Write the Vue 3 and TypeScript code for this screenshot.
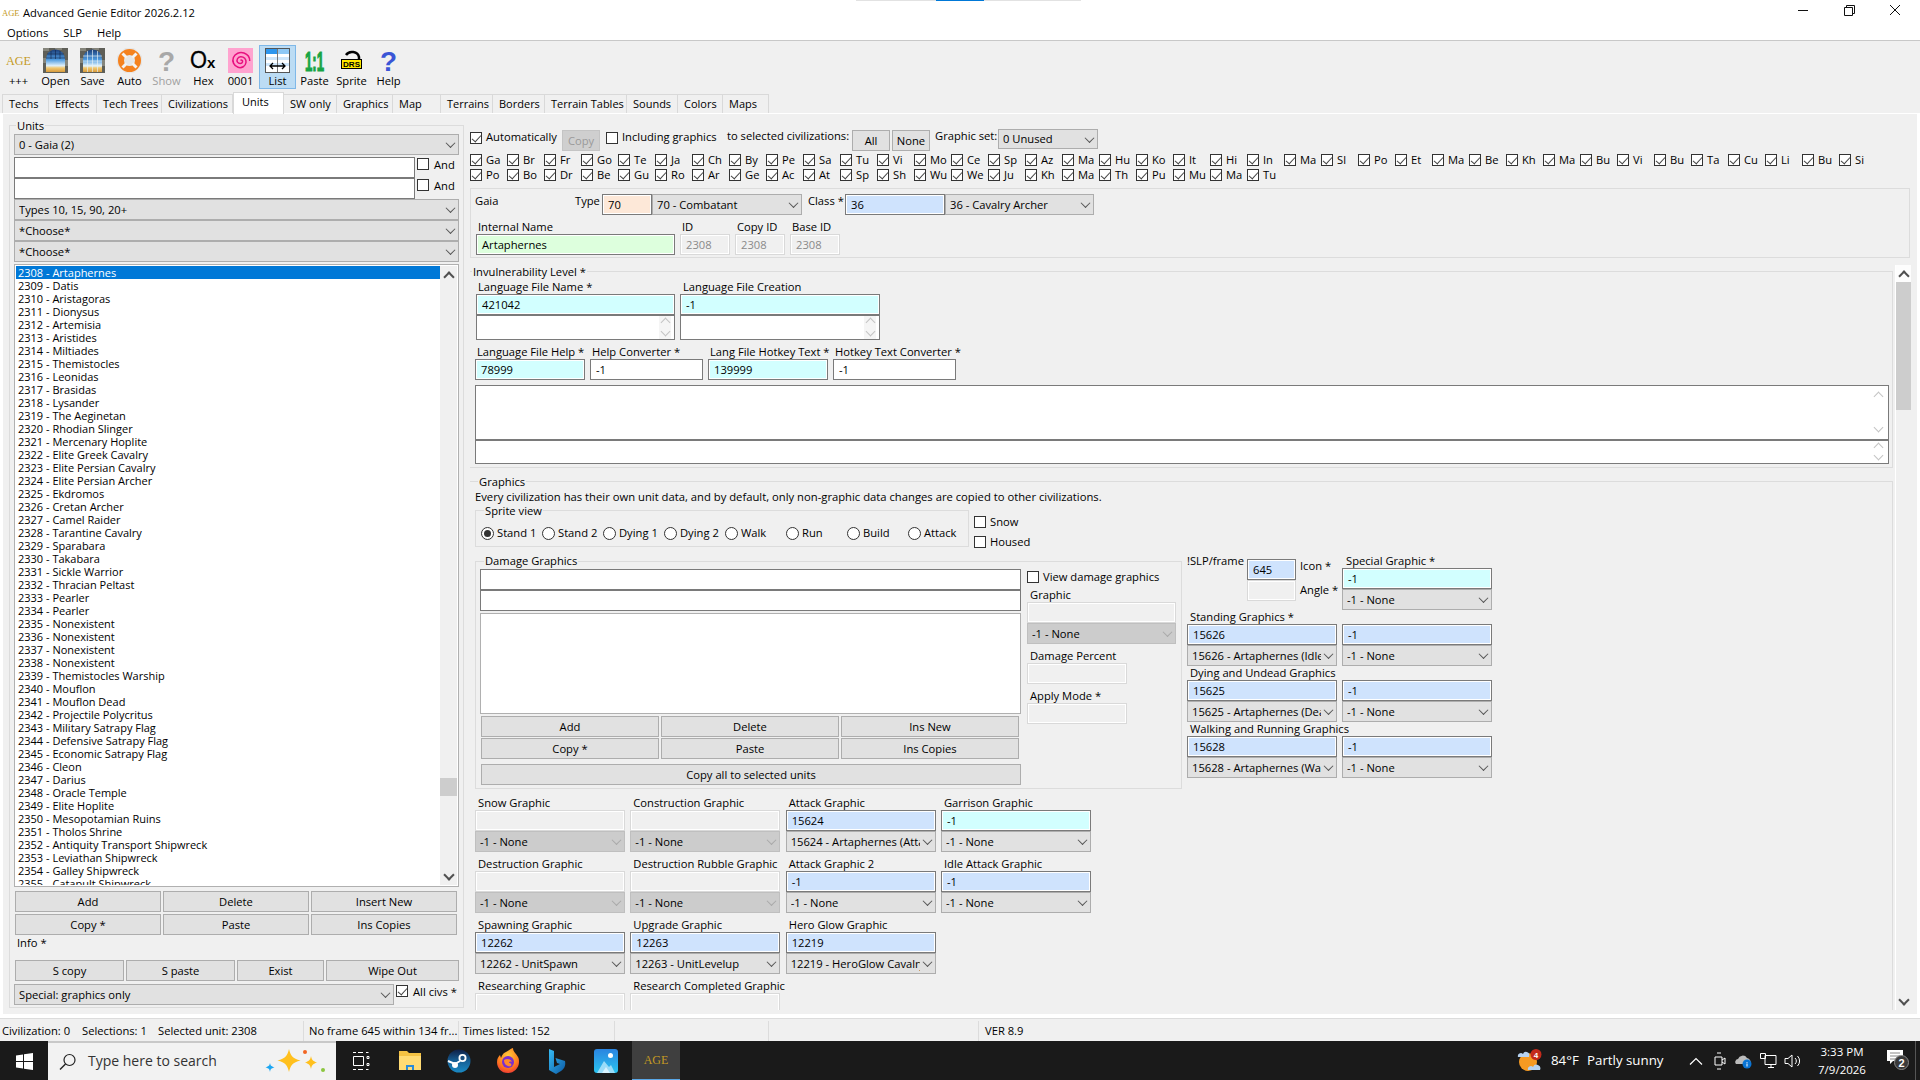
<script setup lang="ts">
const units: string[] = ['Artaphernes','Datis','Aristagoras','Dionysus','Artemisia','Aristides','Miltiades','Themistocles','Leonidas','Brasidas','Lysander','The Aeginetan','Rhodian Slinger','Mercenary Hoplite','Elite Greek Cavalry','Elite Persian Cavalry','Elite Persian Archer','Ekdromos','Cretan Archer','Camel Raider','Tarantine Cavalry','Sparabara','Takabara','Sickle Warrior','Thracian Peltast','Pearler','Pearler','Nonexistent','Nonexistent','Nonexistent','Nonexistent','Themistocles Warship','Mouflon','Mouflon Dead','Projectile Polycritus','Military Satrapy Flag','Defensive Satrapy Flag','Economic Satrapy Flag','Cleon','Darius','Oracle Temple','Elite Hoplite','Mesopotamian Ruins','Tholos Shrine','Antiquity Transport Shipwreck','Leviathan Shipwreck','Galley Shipwreck','Catapult Shipwreck']
const tabs = ['Techs','Effects','Tech Trees','Civilizations','Units','SW only','Graphics','Map','Terrains','Borders','Terrain Tables','Sounds','Colors','Maps']
const civs = 'Ga Br Fr Go Te Ja Ch By Pe Sa Tu Vi Mo Ce Sp Az Ma Hu Ko It Hi In Ma Sl Po Et Ma Be Kh Ma Bu Vi Bu Ta Cu Li Bu Si Po Bo Dr Be Gu Ro Ar Ge Ac At Sp Sh Wu We Ju Kh Ma Th Pu Mu Ma Tu'.split(' ')
const radios = ['Stand 1','Stand 2','Dying 1','Dying 2','Walk','Run','Build','Attack']
interface Gfx { label: string; val: string; cls: string; combo: string; off?: boolean; filler?: boolean }
const gfx: Gfx[] = [
  { label:'Snow Graphic', val:'', cls:'off', combo:'-1 - None', off:true },
  { label:'Construction Graphic', val:'', cls:'off', combo:'-1 - None', off:true },
  { label:'Attack Graphic', val:'15624', cls:'bl', combo:'15624 - Artaphernes (Attack)' },
  { label:'Garrison Graphic', val:'-1', cls:'cy', combo:'-1 - None' },
  { label:'Destruction Graphic', val:'', cls:'off', combo:'-1 - None', off:true },
  { label:'Destruction Rubble Graphic', val:'', cls:'off', combo:'-1 - None', off:true },
  { label:'Attack Graphic 2', val:'-1', cls:'bl', combo:'-1 - None' },
  { label:'Idle Attack Graphic', val:'-1', cls:'bl', combo:'-1 - None' },
  { label:'Spawning Graphic', val:'12262', cls:'bl', combo:'12262 - UnitSpawn' },
  { label:'Upgrade Graphic', val:'12263', cls:'bl', combo:'12263 - UnitLevelup' },
  { label:'Hero Glow Graphic', val:'12219', cls:'bl', combo:'12219 - HeroGlow Cavalry' },
  { label:'', val:'', cls:'', combo:'', filler:true },
  { label:'Researching Graphic', val:'', cls:'off', combo:'-1 - None', off:true },
  { label:'Research Completed Graphic', val:'', cls:'off', combo:'-1 - None', off:true },
]
const pairs = [
  { label:'Standing Graphics *', v:'15626', c:'15626 - Artaphernes (Idle)' },
  { label:'Dying and Undead Graphics', v:'15625', c:'15625 - Artaphernes (Death)' },
  { label:'Walking and Running Graphics', v:'15628', c:'15628 - Artaphernes (Walk)' },
]
</script>

<template>
  <div class="app">
    <div class="loadbar"><i class="lg1"></i><i class="lb"></i><i class="lg2"></i></div>
    <div class="titlebar">
      <span class="t-logo">AGE</span>
      <span class="t-title">Advanced Genie Editor 2026.2.12</span>
      <div class="winbtns">
        <svg width="46" height="23" viewBox="0 0 46 23"><path d="M18 9.500h10" stroke="#111" fill="none"/></svg>
        <svg width="46" height="23" viewBox="0 0 46 23"><path d="M18.500 6.500h8v8h-8zM20.500 6.500v-2h8v8h-2" stroke="#111" fill="none"/></svg>
        <svg width="46" height="23" viewBox="0 0 46 23"><path d="M18 4l10 10M28 4L18 14" stroke="#111" fill="none"/></svg>
      </div>
    </div>
    <div class="menubar"><span>Options</span><span>SLP</span><span>Help</span></div>

    <div class="toolbar">
      <div class="tool">
        <svg class="ti" viewBox="0 0 25 25"><text x="0" y="17" font-family="Liberation Serif" font-size="13" fill="#c49a24" textLength="25" lengthAdjust="spacingAndGlyphs">AGE</text></svg>
        <span>+++</span>
      </div>
      <div class="tool">
        <svg class="ti" viewBox="0 0 25 25">
          <defs><linearGradient id="sky" x1="0" y1="0" x2="0" y2="1"><stop offset="0" stop-color="#1c3f7a"/><stop offset=".45" stop-color="#4f9be0"/><stop offset=".72" stop-color="#dff0fa"/><stop offset=".82" stop-color="#f2c870"/><stop offset="1" stop-color="#d69a3c"/></linearGradient></defs>
          <rect width="25" height="25" fill="#5f5f58"/><path d="M0 0h6v3H0zM12 0h7v2h-7zM0 10h3v5H0zM22 12h3v6h-3z" fill="#85857c"/>
          <path d="M3 24V11a9.500 9.500 0 0 1 19 0v13z" fill="url(#sky)"/>
          <path d="M8 3v8M12.500 2v9M17 3v8M4 6h17M3 10h19" stroke="#10244a" stroke-opacity=".6" fill="none"/>
        </svg>
        <span>Open</span>
      </div>
      <div class="tool">
        <svg class="ti" viewBox="0 0 25 25">
          <rect width="25" height="25" fill="#5f5f58"/><path d="M0 0h6v3H0zM12 0h7v2h-7zM0 10h3v5H0zM22 12h3v6h-3z" fill="#85857c"/>
          <path d="M3 24V11a9.500 9.500 0 0 1 19 0v13z" fill="url(#sky)"/>
          <path d="M7.500 3v21M12.500 2v22M17.500 3v21M3 8h19M3 13h19M3 18h19" stroke="#e8f2f8" stroke-opacity=".65" fill="none"/>
        </svg>
        <span>Save</span>
      </div>
      <div class="tool">
        <svg class="ti" viewBox="0 0 25 25">
          <path d="M8 0h9l8 8v9l-8 8H8l-8-8V8z" fill="#e6e6e6"/>
          <circle cx="12.500" cy="12.500" r="8.500" fill="none" stroke="#f5821f" stroke-width="6"/>
          <path d="M5.500 5.500l4 4M19.500 5.500l-4 4M5.500 19.500l4-4M19.500 19.500l-4-4" stroke="#f3f3f3" stroke-width="3"/>
        </svg>
        <span>Auto</span>
      </div>
      <div class="tool dim">
        <svg class="ti" viewBox="0 0 25 25"><text x="12.500" y="23" text-anchor="middle" font-family="Liberation Sans" font-weight="700" font-size="28" fill="#a8a8a8">?</text></svg>
        <span>Show</span>
      </div>
      <div class="tool">
        <svg class="ti" viewBox="0 0 25 25"><text x="-1" y="20" font-family="Liberation Sans" font-size="24" stroke="#000" stroke-width=".3" fill="#000" textLength="17" lengthAdjust="spacingAndGlyphs">O</text><text x="16" y="20" font-family="Liberation Sans" font-weight="700" font-size="15" fill="#000">x</text></svg>
        <span>Hex</span>
      </div>
      <div class="tool">
        <svg class="ti" viewBox="0 0 25 25"><rect width="25" height="25" fill="#ffa3cf"/><path d="M12.500 12.500c1-1 2.500 0 2 1.500-.6 2-3.800 2-5 .2-1.300-2.200.2-5.200 3-5.500 3.400-.3 6 2.500 5.500 5.800-.5 3.700-4.300 6-8 4.800C6 18 3.800 13.500 5.400 9.500 7 5.500 11.800 3.500 16 5c3.500 1.300 5.800 4.500 5.700 8" fill="none" stroke="#e8107f" stroke-width="1.500"/></svg>
        <span>0001</span>
      </div>
      <div class="tool active">
        <svg class="ti" viewBox="0 0 25 25">
          <rect x=".5" y=".5" width="24" height="24" fill="#fff" stroke="#555"/>
          <path d="M1 1h11v5H1z" fill="#2d96ee"/><path d="M13 1h11v5H13z" fill="#8ec8f5"/>
          <path d="M1 9h11v3H1zM13 9h11v3H13zM1 15h11v3H1zM13 15h11v3H13z" fill="#cfe6fa"/>
          <path d="M12.500 1v23" stroke="#777"/>
          <path d="M5 18h15M8 15l-3 3 3 3M17 15l3 3-3 3" fill="none" stroke="#000" stroke-width="1.300"/>
        </svg>
        <span>List</span>
      </div>
      <div class="tool">
        <svg class="ti" viewBox="0 0 25 25"><text x="3" y="23" font-family="Liberation Sans" font-weight="700" font-size="28" fill="#17a444" stroke="#17a444" stroke-width="1.200" textLength="19" lengthAdjust="spacingAndGlyphs">1:1</text></svg>
        <span>Paste</span>
      </div>
      <div class="tool">
        <svg class="ti" viewBox="0 0 25 25"><path d="M7 7a7 6 0 0 1 13 2v6" fill="none" stroke="#000" stroke-width="2.500"/><rect x="2.500" y="11.500" width="20" height="9" fill="#ffe800" stroke="#000"/><text x="4" y="19" font-family="Liberation Sans" font-weight="700" font-size="8" fill="#000" textLength="17" lengthAdjust="spacingAndGlyphs">DRS</text></svg>
        <span>Sprite</span>
      </div>
      <div class="tool">
        <svg class="ti" viewBox="0 0 25 25"><text x="12.500" y="23" text-anchor="middle" font-family="Liberation Sans" font-weight="700" font-size="28" fill="#3a55d6">?</text></svg>
        <span>Help</span>
      </div>
    </div>

    <div class="tabs">
      <div v-for="t in tabs" :key="t" class="tab" :class="{ sel: t === 'Units' }">{{ t }}</div>
    </div>

    <div class="notebook">
      <!-- left column -->
      <div class="group units">
        <div class="legend">Units</div>
        <div class="combo first"><span>0 - Gaia (2)</span></div>
        <div class="searchrow"><div class="box"></div><div class="cb"></div><span>And</span></div>
        <div class="searchrow"><div class="box"></div><div class="cb"></div><span>And</span></div>
        <div class="combo"><span>Types 10, 15, 90, 20+</span></div>
        <div class="combo"><span>*Choose*</span></div>
        <div class="combo"><span>*Choose*</span></div>
        <div class="listbox">
          <div class="listrows">
            <div v-for="(u, i) in units" :key="i" class="lrow" :class="{ sel: i === 0 }">{{ 2308 + i }} - {{ u }}</div>
          </div>
          <div class="lscroll">
            <div class="arrow up"></div>
            <div class="lthumb"></div>
            <div class="arrow down push"></div>
          </div>
        </div>
        <div class="btngrid">
          <div class="btn">Add</div><div class="btn">Delete</div><div class="btn">Insert New</div>
          <div class="btn">Copy *</div><div class="btn">Paste</div><div class="btn">Ins Copies</div>
        </div>
        <div class="info">Info *</div>
        <div class="srow">
          <div class="btn">S copy</div><div class="btn">S paste</div><div class="btn">Exist</div><div class="btn">Wipe Out</div>
        </div>
        <div class="special">
          <div class="combo"><span>Special: graphics only</span></div>
          <div class="cb on"></div><span>All civs *</span>
        </div>
      </div>

      <!-- right column -->
      <div class="right">
        <div class="row1">
          <div class="cb on"></div><span class="w-auto">Automatically</span>
          <div class="btn copy">Copy</div>
          <div class="cb"></div><span class="w-inc">Including graphics</span>
          <span class="w-to">to selected civilizations:</span>
          <div class="btn allbtn">All</div><div class="btn nonebtn">None</div>
          <span class="w-set">Graphic set:</span>
          <div class="combo setc"><span>0 Unused</span></div>
        </div>
        <div class="civgrid">
          <div v-for="(c, i) in civs" :key="i" class="civ"><div class="cb on"></div><span>{{ c }}</span></div>
        </div>

        <div class="gaia">
          <div class="g1">
            <span class="gaia-l">Gaia</span><span class="type-l">Type</span>
            <div class="box or w50">70</div><div class="combo w150"><span>70 - Combatant</span></div>
            <span class="class-l">Class *</span>
            <div class="box bl w100">36</div><div class="combo w149"><span>36 - Cavalry Archer</span></div>
          </div>
          <div class="g2">
            <div class="fld w199"><label>Internal Name</label><div class="box gr">Artaphernes</div></div>
            <div class="fld w50"><label>ID</label><div class="box off dimtxt">2308</div></div>
            <div class="fld w50"><label>Copy ID</label><div class="box off dimtxt">2308</div></div>
            <div class="fld w50"><label>Base ID</label><div class="box off dimtxt">2308</div></div>
          </div>
        </div>

        <div class="scrollwrap">
          <div class="scrollcontent">
            <div class="sec inv">
              <div class="legend linv">Invulnerability Level *</div>
              <div class="langs">
                <div class="fld w199"><label>Language File Name *</label><div class="box cy">421042</div><div class="multi h25"><div class="spin"><i class="arrow up pale"></i><i class="arrow down pale"></i></div></div></div>
                <div class="fld w200"><label>Language File Creation</label><div class="box cy">-1</div><div class="multi h25"><div class="spin"><i class="arrow up pale"></i><i class="arrow down pale"></i></div></div></div>
              </div>
              <div class="langs2">
                <div class="fld w110"><label>Language File Help *</label><div class="box cy">78999</div></div>
                <div class="fld w113"><label>Help Converter *</label><div class="box">-1</div></div>
                <div class="fld w120"><label>Lang File Hotkey Text *</label><div class="box cy">139999</div></div>
                <div class="fld w123"><label>Hotkey Text Converter *</label><div class="box">-1</div></div>
              </div>
              <div class="multi big h55"><div class="spin"><i class="arrow up pale"></i><i class="arrow down pale"></i></div></div>
              <div class="multi big h25"><div class="spin"><i class="arrow up pale"></i><i class="arrow down pale"></i></div></div>
            </div>

            <div class="sec gfx">
              <div class="legend">Graphics</div>
              <div class="desc">Every civilization has their own unit data, and by default, only non-graphic data changes are copied to other civilizations.</div>
              <div class="spriterow">
                <div class="spritebox">
                  <div class="legend l8">Sprite view</div>
                  <div class="radios">
                    <div v-for="(r, i) in radios" :key="r" class="radio"><div class="rd" :class="{ on: i === 0 }"></div><span>{{ r }}</span></div>
                  </div>
                </div>
                <div class="snow">
                  <div class="chk"><div class="cb"></div><span>Snow</span></div>
                  <div class="chk"><div class="cb"></div><span>Housed</span></div>
                </div>
              </div>

              <div class="midrow">
                <div class="damage">
                  <div class="legend l8 ldmg">Damage Graphics</div>
                  <div class="dmgbody">
                    <div class="dmgleft">
                      <div class="box"></div><div class="box"></div>
                      <div class="dlist"></div>
                      <div class="btngrid3">
                        <div class="btn">Add</div><div class="btn">Delete</div><div class="btn">Ins New</div>
                        <div class="btn">Copy *</div><div class="btn">Paste</div><div class="btn">Ins Copies</div>
                      </div>
                      <div class="btn copyall">Copy all to selected units</div>
                    </div>
                    <div class="dmgright">
                      <div class="chk view"><div class="cb"></div><span>View damage graphics</span></div>
                      <div class="fld"><label>Graphic</label><div class="box off"></div><div class="combo off"><span>-1 - None</span></div></div>
                      <div class="fld w100 mt5"><label>Damage Percent</label><div class="box off"></div></div>
                      <div class="fld w100 mt5"><label>Apply Mode *</label><div class="box off"></div></div>
                    </div>
                  </div>
                </div>

                <div class="side">
                  <div class="sidetop">
                    <span class="slp">!SLP/frame</span>
                    <div class="slpin"><div class="box bl">645</div><div class="box off"></div></div>
                    <div class="iconl"><span>Icon *</span><span>Angle *</span></div>
                    <div class="fld w150"><label>Special Graphic *</label><div class="box cy">-1</div><div class="combo"><span>-1 - None</span></div></div>
                  </div>
                  <div v-for="p in pairs" :key="p.label" class="pair">
                    <label>{{ p.label }}</label>
                    <div class="pairgrid">
                      <div class="box bl">{{ p.v }}</div><div class="box bl">-1</div>
                      <div class="combo"><span>{{ p.c }}</span></div><div class="combo"><span>-1 - None</span></div>
                    </div>
                  </div>
                </div>
              </div>

              <div class="gfxgrid">
                <div v-for="(g, i) in gfx" :key="i" class="fld">
                  <template v-if="!g.filler">
                    <label>{{ g.label }}</label>
                    <div class="box" :class="g.cls">{{ g.val }}</div>
                    <div class="combo" :class="{ off: g.off }"><span>{{ g.combo }}</span></div>
                  </template>
                </div>
              </div>
            </div>
          </div>
          <div class="vscroll">
            <div class="arrow up cell"></div>
            <div class="vthumb"></div>
            <div class="arrow down push"></div>
          </div>
        </div>
      </div>
    </div>

    <div class="status">
      <div class="sf f1"><span>Civilization: 0</span><span>Selections: 1</span><span>Selected unit: 2308</span></div>
      <div class="sf f2">No frame 645 within 134 fr...</div>
      <div class="sf f3">Times listed: 152</div>
      <div class="sf f4"></div>
      <div class="sf f5"></div>
      <div class="sf f6">VER 8.9</div>
    </div>

    <div class="taskbar">
      <div class="start">
        <svg width="17" height="17" viewBox="0 0 17 17"><path d="M0 2.400 7 1.400V8H0zM8 1.300 17 0v8H8zM0 9h7v6.600l-7-1zM8 9h9v8l-9-1.300z" fill="#fff"/></svg>
      </div>
      <div class="search">
        <svg width="18" height="18" viewBox="0 0 18 18"><circle cx="10.500" cy="7" r="5.500" fill="none" stroke="#222" stroke-width="1.200"/><path d="M6.500 11 1 16.500" stroke="#222" stroke-width="1.500"/></svg>
        <span>Type here to search</span>
        <svg class="spark" width="62" height="28" viewBox="0 0 62 28">
          <path d="M24 1c1.500 6.500 3.500 9.500 11.500 11.500C27.500 14.500 25.500 17.500 24 24c-1.500-6.500-3.500-9.500-11.500-11.500C20.500 10.500 22.500 7.500 24 1z" fill="#ffc01e"/>
          <path d="M46 8c.7 3.500 1.500 5 6 6.500-4.500 1.500-5.300 3-6 6.500-.7-3.500-1.500-5-6-6.500 4.500-1.500 5.300-3 6-6.500z" fill="#ffc01e"/>
          <circle cx="40" cy="4" r="2" fill="#f26522"/><circle cx="58" cy="22" r="2" fill="#8cc63f"/>
          <path d="M5 15c.5 2.500 1 3 4.500 4.500C6 20.500 5.500 21 5 24c-.5-3-1-3.500-4.500-4.500C4 18 4.500 17.500 5 15z" fill="#1ea7f2"/>
        </svg>
      </div>
      <div class="tb">
        <svg width="18" height="18" viewBox="0 0 18 18"><path d="M1 .5h3M6 .5h5M14 .5h2.500M1 17.500h3M6 17.500h5M14 17.500h2.500M1.500 4.500h10v9h-10zM15 4.500h2v2h-2zM15 11.500h2v2h-2z" fill="none" stroke="#fff"/></svg>
      </div>
      <div class="tb">
        <svg width="24" height="22" viewBox="0 0 24 22"><path d="M1 1h8l2 2h12v17H1z" fill="#f4c243"/><path d="M1 6h22v14H1z" fill="#ffdb73"/><path d="M8 20v-5h8v5h-2v-3h-4v3z" fill="#2a8bd8"/></svg>
      </div>
      <div class="tb">
        <svg width="24" height="24" viewBox="0 0 24 24"><defs><linearGradient id="stm" x1="0" y1="0" x2="0" y2="1"><stop offset="0" stop-color="#0f1f45"/><stop offset=".5" stop-color="#165f95"/><stop offset="1" stop-color="#1a8ac4"/></linearGradient></defs><circle cx="12" cy="12" r="11.500" fill="url(#stm)"/><circle cx="15.500" cy="9" r="4" fill="#fff"/><circle cx="15.500" cy="9" r="2.200" fill="#1a4f80"/><circle cx="8" cy="16" r="3" fill="#fff"/><path d="M1 12l7 3 5-3" stroke="#fff" stroke-width="2" fill="none"/></svg>
      </div>
      <div class="tb">
        <svg width="24" height="26" viewBox="0 0 24 26"><defs><radialGradient id="fx" cx=".5" cy=".3" r=".8"><stop offset="0" stop-color="#ffcc3a"/><stop offset=".6" stop-color="#ff7b1e"/><stop offset="1" stop-color="#e8243c"/></radialGradient></defs><path d="M12 25C5 25 1 20 1 14c0-4 2-6 3-7l1 3c1-4 4-6 5-6 3-2 6-4 7-4 0 4 3 5 5 9 1 2 1 3 1 5 0 6-5 11-11 11z" fill="url(#fx)"/><circle cx="12" cy="14" r="6" fill="#7a2fd0"/><path d="M8 12c3-2 7-1 8 2-2-1-3 0-3 1 2 0 3 1 2 3-3 1-7-1-7-6z" fill="#ff8a2a"/></svg>
      </div>
      <div class="tb">
        <svg width="18" height="26" viewBox="0 0 18 26"><defs><linearGradient id="bg" x1="0" y1="0" x2="1" y2="1"><stop offset="0" stop-color="#37bdf5"/><stop offset="1" stop-color="#0c59a4"/></linearGradient></defs><path d="M1 1l5 2v16l6-3-3-1-1.500-5L17 13c1 5-1 8-4 10l-5 3-7-4z" fill="url(#bg)"/></svg>
      </div>
      <div class="tb">
        <svg width="24" height="24" viewBox="0 0 24 24"><defs><linearGradient id="ph" x1="0" y1="0" x2="0" y2="1"><stop offset="0" stop-color="#2a84e0"/><stop offset="1" stop-color="#2ac4f0"/></linearGradient></defs><rect width="24" height="24" rx="3" fill="url(#ph)"/><circle cx="16.500" cy="6.500" r="2.500" fill="#fff"/><path d="M3 24l7-12 5 6 2-2 4 8z" fill="#9adcf8"/><path d="M8 24l4-6 4 6z" fill="#d8f2fd"/></svg>
      </div>
      <div class="tb age"><span>AGE</span></div>

      <div class="tray">
        <svg width="26" height="24" viewBox="0 0 26 24"><circle cx="11" cy="13" r="9" fill="#f59a23"/><path d="M1 8a3 3 0 0 1 5-3 3 3 0 0 1 6 2 1 1 0 0 1 0 1H1zM11 21a3 3 0 0 1 5-3 3 3 0 0 1 7 3H11z" fill="#b6d2f0"/><circle cx="19" cy="5.500" r="5.500" fill="#c42b1c"/><text x="19" y="8.500" text-anchor="middle" font-family="Liberation Sans" font-weight="700" font-size="8" fill="#fff">4</text></svg>
        <span class="temp">84°F</span><span class="sky">Partly sunny</span>
        <svg class="chev" width="14" height="8" viewBox="0 0 14 8"><path d="M1 7.500l6-6 6 6" stroke="#fff" fill="none" stroke-width="1.200"/></svg>
        <svg class="ic1" width="12" height="20" viewBox="0 0 12 20"><path d="M1 6h7v8H1zM8 9l3-2v6l-3-2M3 2h4M3 18h4" fill="none" stroke="#fff"/></svg>
        <svg class="ic2" width="18" height="16" viewBox="0 0 18 16"><path d="M1 11a3 3 0 0 1 2-5 5 5 0 0 1 9-1 4 4 0 0 1 3 6z" fill="#bcbcbc"/><circle cx="12" cy="11" r="4.500" fill="#0a74d4"/><path d="M12 9v.8M12 10.500v3" stroke="#fff"/></svg>
        <svg class="ic3" width="17" height="16" viewBox="0 0 17 16"><path d="M5 2.500h11v9H5zM8 14.500h6M11 11.500v3M.5.5h5v5h-5z" fill="#1a1a1a" stroke="#fff"/></svg>
        <svg class="ic4" width="17" height="14" viewBox="0 0 17 14"><path d="M1 4.500h3l4-3.500v12l-4-3.500H1zM11 4a4 4 0 0 1 0 6M13.500 2a7 7 0 0 1 0 10" fill="none" stroke="#fff"/></svg>
        <div class="clock"><span>3:33 PM</span><span>7/9/2026</span></div>
        <div class="notif">
          <svg width="24" height="22" viewBox="0 0 24 22"><path d="M1 1h16v11H7l-3 3v-3H1z" fill="#fff"/><path d="M4 4h10M4 7h10M4 10h6" stroke="#888"/><circle cx="15.500" cy="13.500" r="7" fill="#3a3a3a" stroke="#888"/><text x="15.500" y="17.500" text-anchor="middle" font-family="Liberation Sans" font-weight="700" font-size="11" fill="#fff">2</text></svg>
        </div>
        <div class="desk"></div>
      </div>
    </div>
  </div>
</template>

<style>
html, body { margin: 0; padding: 0; overflow: hidden; background: #fff; }
</style>

<style scoped>
* { box-sizing: border-box; }
.app { width: 1920px; height: 1080px; display: flex; flex-direction: column; overflow: hidden; background: #fff; color: #000; font-family: "Open Sans", "Liberation Sans", sans-serif; font-size: 11.2px; line-height: 14px; }
.loadbar { height: 1px; flex: none; display: flex; padding-left: 856px; }
.loadbar i { display: block; height: 1px; }
.lg1 { width: 80px; background: #e2e2e2; }
.lb { width: 48px; background: #0078d7; }
.lg2 { width: 97px; background: #e2e2e2; }
.titlebar { height: 23px; display: flex; align-items: center; flex: none; padding-left: 2px; }
.t-logo { font-family: "Liberation Serif", serif; font-size: 8.500px; color: #c49a24; width: 21px; flex: none; }
.t-title { white-space: nowrap; }
.winbtns { margin-left: auto; display: flex; margin-right: 2px; }
.menubar { height: 17px; flex: none; display: flex; padding: 1px 0 0 7px; gap: 15px; border-bottom: 1px solid #c8c8c8; align-items: center; }
.toolbar { height: 51px; flex: none; display: flex; background: #f0f0f0; padding-top: 4px; }
.tool { width: 37px; height: 44px; display: flex; flex-direction: column; align-items: center; padding-top: 3px; }
.tool.active { background: #bcdcf4; box-shadow: inset 0 0 0 1px #7fb8e8; }
.tool.dim span { color: #a0a0a0; }
.ti { width: 25px; height: 25px; display: block; flex: none; margin-bottom: 1px; overflow: visible; }
.tabs { height: 21px; flex: none; display: grid; grid-template-columns: 47px 48px 65px 71px 51px 53px 56px 48px 52px 52px 82px 51px 45px 46px; justify-content: start; padding-left: 2px; background: #f0f0f0; align-items: end; font-size: 11px; }
.tab { height: 19px; border: 1px solid #d9d9d9; border-bottom: 0; border-left-width: 0; padding-left: 6px; line-height: 18px; background: #f0f0f0; white-space: nowrap; }
.tab:first-child { border-left-width: 1px; }
.tab.sel { height: 22px; margin-bottom: -1px; background: #fff; line-height: 17px; padding-left: 8px; position: relative; border-color: #d9d9d9; border-left-width: 1px; }
.notebook { height: 905px; flex: none; border: 3px solid #fff; border-top-width: 1px; border-bottom-width: 4px; background: #f0f0f0; display: flex; align-items: flex-start; }

.legend { width: fit-content; height: 14px; margin-top: -7px; padding: 0 1px; background: #f0f0f0; white-space: nowrap; margin-left: 2px; }
.l8 { margin-left: 8px; }
.linv { margin-left: -3px; }
.ldmg { margin-top: -8px; margin-bottom: 1px; }
.group { border: 1px solid #dcdcdc; }
.units { margin: 11px 0 0 6px; width: 455px; height: 883px; padding: 0 4px; flex: none; }
.first { margin-top: 1px; margin-bottom: 2px; }
.combo { height: 21px; border: 1px solid #adadad; background: #e1e1e1; display: flex; align-items: center; padding-left: 4px; }
.combo > span { flex: 1 1 auto; min-width: 0; overflow: hidden; white-space: nowrap; }
.combo::after { content: ""; flex: none; width: 6px; height: 6px; border-right: 1px solid #555; border-bottom: 1px solid #555; transform: rotate(45deg) translate(-1px, -1px); margin: 0 4px 0 4px; }
.combo.off { background: #cccccc; border-color: #bfbfbf; }
.combo.off::after { border-color: #a9a9a9; }
.box { height: 21px; border: 1px solid #7a7a7a; background: #fff; box-shadow: inset 0 0 0 1px #fff; padding-left: 5px; line-height: 19px; white-space: nowrap; overflow: hidden; }
.box.cy { background: #d2ffff; }
.box.bl { background: #cfe3fd; }
.box.gr { background: #ddffdd; }
.box.or { background: #fde8d8; }
.box.off { background: #f0f0f0; border-color: #d9d9d9; }
.dimtxt { color: #8a8a8a; }
.cb { width: 12px; height: 12px; flex: none; border: 1px solid #333; background: #fff; }
.cb.on::after { content: ""; display: block; width: 4px; height: 8px; border-right: 1px solid #444; border-bottom: 1px solid #444; transform: rotate(42deg); margin: -0.500px 0 0 3px; }
.searchrow { display: flex; align-items: flex-start; gap: 2px; width: 100%; }
.searchrow .box { width: 401px; flex: none; }
.searchrow .cb { margin-top: 1px; }
.searchrow span { margin: 1px 0 0 3px; }
.listbox { margin-top: 2px; height: 623px; border: 1px solid #b0b0b0; background: #fff; padding: 1px; display: flex; overflow: hidden; }
.listrows { flex: 1; min-width: 0; overflow: hidden; font-size: 11px; }
.lrow { height: 13px; line-height: 13px; padding-left: 2px; white-space: nowrap; }
.lrow.sel { background: #0078d7; color: #fff; }
.lscroll { width: 17px; flex: none; background: #f0f0f0; display: flex; flex-direction: column; align-items: stretch; }
.arrow { display: block; height: 17px; flex: none; }
.arrow::after { content: ""; display: block; width: 6px; height: 6px; margin: 7px auto 0; border-left: 2px solid #505050; border-top: 2px solid #505050; transform: rotate(45deg); }
.arrow.down::after { transform: rotate(225deg); margin-top: 3px; }
.arrow.pale::after { border-color: #c4c4c4; border-width: 1px 0 0 1px; }
.push { margin-top: auto; }
.lthumb { margin-top: 495px; height: 18px; background: #cdcdcd; }
.btngrid { display: grid; grid-template-columns: repeat(3, 146px); grid-auto-rows: 21px; gap: 2px; margin: 4px 0 0 1px; }
.btn { height: 21px; border: 1px solid #adadad; background: #e1e1e1; text-align: center; line-height: 19px; white-space: nowrap; }
.info { height: 14px; margin: 1px 0 0 3px; line-height: 14px; }
.srow { display: grid; grid-template-columns: 109px 109px 87px 133px; gap: 2px; margin: 10px 0 0 1px; }
.special { display: flex; align-items: flex-start; margin-top: 3px; }
.special .combo { width: 380px; flex: none; }
.special .cb { margin: 1px 5px 0 2px; }
.special > span { margin-top: 1px; }

.right { margin-left: 6px; width: 1441px; flex: none; padding-top: 15px; }
.row1 { height: 22px; display: flex; align-items: flex-start; }
.row1 > .cb { margin-top: 3px; }
.row1 > span { margin-top: 1px; }
.row1 > .btn { margin-top: 1px; }
.w-auto { margin-left: 4px; width: 76px; }
.copy { width: 38px; background: #cfcfcf; border-color: #c4c4c4; color: #9a9a9a; flex: none; }
.row1 .cb:nth-of-type(3) { margin-left: 6px; }
.row1 .w-inc { margin-left: 4px; width: 105px; margin-top: 1px; }
.row1 .w-to { width: 125px; margin-top: 0; }
.allbtn, .nonebtn { width: 38px; flex: none; }
.nonebtn { margin-left: 2px; }
.row1 .w-set { margin-left: 5px; width: 63px; margin-top: 0; }
.setc { width: 100px; flex: none; height: 20px; }
.civgrid { display: grid; grid-template-columns: repeat(38, 37px); grid-auto-rows: 15px; margin-top: 3px; }
.civ { display: flex; align-items: center; gap: 4px; height: 12px; white-space: nowrap; }

.gaia { margin-top: 4px; height: 70px; width: 1440px; border: 1px solid #dcdcdc; padding: 5px 0 0 4px; }
.g1 { display: flex; align-items: center; height: 21px; }
.gaia-l { width: 100px; margin-top: -7px; }
.type-l { width: 27px; margin-top: -7px; }
.class-l { margin-left: 6px; width: 37px; margin-top: -7px; white-space: nowrap; }
.w50 { width: 50px; flex: none; }
.w100 { width: 100px; flex: none; }
.w150 { width: 150px; flex: none; }
.w149 { width: 149px; flex: none; }
.w199 { width: 199px; flex: none; }
.w200 { width: 200px; flex: none; }
.w110 { width: 110px; flex: none; }
.w113 { width: 113px; flex: none; }
.w120 { width: 120px; flex: none; }
.w123 { width: 123px; flex: none; }
.g2 { display: flex; gap: 5px; margin: 5px 0 0 1px; }
.fld { display: flex; flex-direction: column; }
.fld label, .pair label { height: 14px; line-height: 14px; padding-left: 2px; white-space: nowrap; display: block; }
.gfxgrid .fld label, .pair label, .dmgright .fld label, .w200 label { padding-left: 3px; }
.sidetop .fld label { padding-left: 4px; }

.scrollwrap { display: flex; margin-top: 4px; height: 748px; overflow: hidden; align-items: flex-start; }
.scrollcontent { width: 1425px; flex: none; height: 748px; overflow: hidden; padding-top: 9px; }
.vscroll { width: 16px; height: 745px; margin-top: 3px; background: #f0f0f0; display: flex; flex-direction: column; border-left: 1px solid #fff; }
.vthumb { height: 128px; background: #cdcdcd; }
.cell { background: #fdfdfd; }
.sec { border-top: 1px solid #dcdcdc; border-bottom: 1px solid #dcdcdc; border-right: 1px solid #dcdcdc; width: 1423px; }
.inv { height: 197px; padding-left: 5px; }
.langs { display: flex; gap: 5px; margin: 1px 0 0 1px; }
.langs2 { display: flex; gap: 5px; margin: 5px 0 0 0; }
.multi { border: 1px solid #7a7a7a; background: #fff; display: flex; justify-content: flex-end; overflow: hidden; }
.h25 { height: 25px; }
.h55 { height: 55px; }
.big { width: 1414px; }
.inv .h55 { margin-top: 5px; }
.inv .big.h25 { height: 24px; }
.spin { width: 12px; margin-right: 3px; background: #f5f5f5; display: flex; flex-direction: column; justify-content: space-between; }
.big .spin { margin-right: 4px; background: #fff; }
.h55 .spin { padding: 4px 0; }
.spin .arrow { height: 11px; }
.spin .arrow::after { margin-top: 3px; }
.spin .arrow.down::after { margin-top: 0; }

.gfx { margin-top: 13px; height: 540px; padding-left: 5px; }
.gfx > .legend { margin-left: 3px; }
.desc { height: 14px; margin-top: 1px; white-space: nowrap; font-size: 11.250px; }
.spriterow { display: flex; margin-top: 6px; }
.spritebox { width: 494px; height: 37px; border: 1px solid #dcdcdc; flex: none; }
.radios { display: grid; grid-template-columns: repeat(8, 61px); margin: 8px 0 0 5px; }
.radio { display: flex; align-items: center; gap: 3px; white-space: nowrap; }
.rd { width: 13px; height: 13px; border: 1px solid #333; border-radius: 50%; background: #fff; flex: none; display: flex; align-items: center; justify-content: center; }
.rd.on::after { content: ""; width: 7px; height: 7px; border-radius: 50%; background: #333; }
.snow { margin: 6px 0 0 5px; display: flex; flex-direction: column; gap: 8px; }
.chk { display: flex; align-items: center; gap: 4px; white-space: nowrap; height: 12px; }

.midrow { display: flex; margin-top: 6px; align-items: flex-start; }
.damage { width: 707px; height: 228px; margin-top: 7px; border: 1px solid #dcdcdc; flex: none; }
.dmgbody { display: flex; padding: 0 0 0 4px; }
.dmgleft { width: 541px; flex: none; }
.dlist { height: 101px; margin-top: 2px; border: 1px solid #b0b0b0; background: #fff; }
.btngrid3 { display: grid; grid-template-columns: repeat(3, 178px); gap: 1px 2px; margin: 2px 0 0 1px; grid-auto-rows: 21px; }
.copyall { margin: 5px 0 0 1px; width: 540px; }
.dmgright { margin-left: 6px; width: 149px; flex: none; }
.view { margin-top: 2px; margin-bottom: 5px; }
.mt5 { margin-top: 5px; }

.side { margin-left: 5px; width: 305px; flex: none; }
.sidetop { display: flex; height: 56px; }
.slp { width: 60px; flex: none; }
.slpin { width: 49px; flex: none; margin-top: 5px; }
.iconl { width: 47px; flex: none; padding-left: 4px; display: flex; flex-direction: column; gap: 10px; margin-top: 5px; }
.sidetop .fld { margin-left: -1px; width: 150px; }
.pairgrid { display: grid; grid-template-columns: 150px 150px; column-gap: 5px; }

.gfxgrid { display: grid; grid-template-columns: repeat(4, 150px); column-gap: 5.330px; row-gap: 5px; margin-top: 7px; }

.status { height: 23px; flex: none; background: #f0f0f0; border-top: 1px solid #dcdcdc; display: flex; padding-top: 2px; line-height: 20px; white-space: nowrap; }
.sf { border-right: 1px solid #dcdcdc; flex: none; padding-left: 2px; }
.f1 { width: 304px; display: grid; grid-template-columns: 80px 76px 1fr; }
.f2 { width: 155px; padding-left: 5px; overflow: hidden; }
.f3 { width: 156px; padding-left: 4px; }
.f4 { width: 154px; }
.f5 { width: 210px; }
.f6 { border-right: 0; padding-left: 6px; }

.taskbar { height: 40px; flex: none; background: #1a1a1a; display: flex; color: #fff; }
.start { width: 48px; display: flex; align-items: center; justify-content: center; }
.search { width: 288px; background: #f2f2f2; color: #333; display: flex; align-items: center; border-top: 2px solid #c8c8c8; font-size: 14px; padding-left: 11px; }
.search > span { margin: -2px 0 0 11px; width: 135px; white-space: nowrap; }
.spark { margin-left: 42px; flex: none; }
.tb { width: 49px; display: flex; align-items: center; justify-content: center; flex: none; }
.tb.age { width: 48px; margin-left: 2px; background: #3f3f3f; border-bottom: 2px solid #5aa8e8; font-family: "Liberation Serif", serif; color: #c49a24; font-size: 12px; }
.tray { margin-left: auto; display: flex; align-items: center; }
.temp { margin: -2px 0 0 8px; font-size: 13.300px; width: 36px; white-space: nowrap; }
.sky { margin-top: -2px; font-size: 13.300px; width: 90px; white-space: nowrap; }
.chev { margin-left: 12px; }
.ic1 { margin-left: 11px; }
.ic2 { margin-left: 9px; }
.ic3 { margin-left: 7px; }
.ic4 { margin-left: 7px; }
.clock { width: 72px; margin-left: 5px; display: flex; flex-direction: column; align-items: center; font-size: 11.500px; line-height: 18px; }
.notif { margin-left: 8px; width: 27px; }
.desk { width: 5px; height: 40px; margin-left: 2px; border-left: 1px solid #555; }
</style>
